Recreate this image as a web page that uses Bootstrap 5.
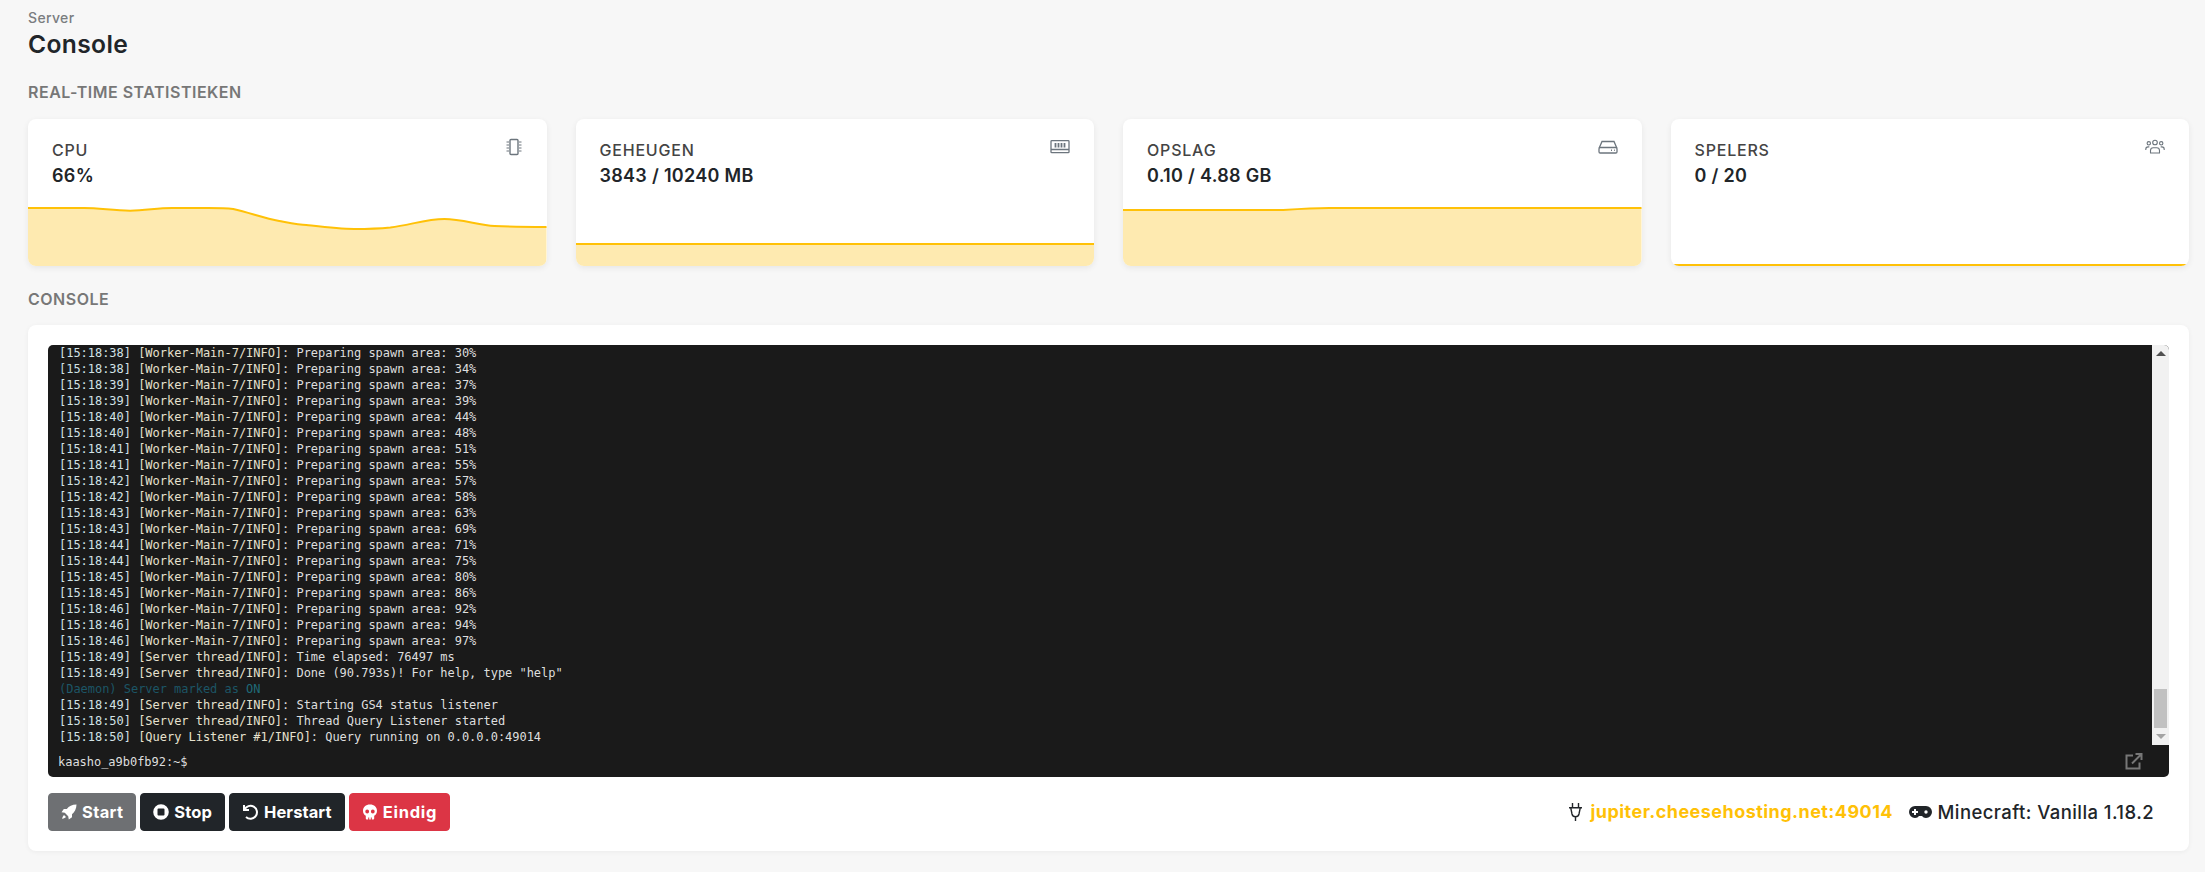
<!DOCTYPE html>
<html lang="nl">
<head>
<meta charset="utf-8">
<title>Console</title>
<link href="https://cdn.jsdelivr.net/npm/bootstrap@5.3.0/dist/css/bootstrap.min.css" rel="stylesheet">
<style>
html,body{height:872px;overflow:hidden}
body{background:#f7f7f7;font-family:Inter,"Liberation Sans",sans-serif;color:#212529}
.page-wrap{padding:9px 16px 0 28px}
.crumb{font-size:14px;line-height:18px;font-weight:500;color:#7a7d80;letter-spacing:.35px}
.page-title{font-size:24.6px;line-height:29px;font-weight:600;margin:3px 0 0;letter-spacing:.35px}
.sect-title{font-size:16px;line-height:21px;font-weight:600;color:#777;margin:0;text-transform:uppercase;letter-spacing:.5px}
.sect-stats{margin-top:23px;margin-bottom:16px}
.sect-console{margin-top:23px;margin-bottom:15px}
.stat-row{--bs-gutter-x:29px;--bs-gutter-y:0}
.stat-card{height:147px;background:#fff;border:0;border-radius:8px;overflow:hidden;box-shadow:0 2px 6px rgba(0,0,0,.07)}
.stat-head{height:81px;padding:19px 24px 0}
.stat-label{font-size:16px;line-height:24px;font-weight:500;color:#444;letter-spacing:.8px}
.stat-value{font-size:18px;line-height:24px;font-weight:600;margin-top:2px;letter-spacing:.3px}
.stat-icon{color:#6c757d;flex:none}
.chart{display:block;width:100%;height:66px}
.area{fill:#feeab0;stroke:none}
.trace{fill:none;stroke:#ffc107;stroke-width:2;vector-effect:non-scaling-stroke}
.console-card{background:#fff;border:0;border-radius:8px;padding:20px;box-shadow:0 1px 5px rgba(0,0,0,.05);height:526px}
.term{background:#1a1a1a;border-radius:5px;height:432px;overflow:hidden;font-family:"DejaVu Sans Mono",monospace;font-size:12px;line-height:16px;color:#dedede;letter-spacing:-.03px}
.term-top{height:400px}
.term-log{flex:1 1 auto;padding-left:11px;white-space:pre;min-width:0}
.term-log .ts{color:#d2e2e6}
.term-log .msg{color:#e6e1ce}
.daemon{color:#1c5565}
.daemon b{font-weight:400;color:#1f6a78}
.sbar{width:17px;background:#f1f1f1;flex:none}
.sbar-up{width:0;height:0;border:5px solid transparent;border-top:0;border-bottom:5px solid #505050;margin:6px auto 0}
.sbar-thumb{width:13px;height:39px;background:#c1c1c1;margin:333px auto 0}
.sbar-down{width:0;height:0;border:5px solid transparent;border-bottom:0;border-top:5px solid #a3a3a3;margin:6px auto 0}
.term-prompt{padding:8px 26px 8px 10px}
.ext-icon{color:#777;display:block}
.act-btn{font-weight:700;font-size:16.5px;line-height:24px;display:inline-flex;align-items:center;gap:5px;--bs-btn-border-radius:4px;letter-spacing:.1px}
.act-btn svg{flex:none}
.act-start{letter-spacing:.35px}
.act-kill{letter-spacing:.75px}
.conn{font-size:18px;line-height:24px;padding-right:15px}
.conn-link{color:#ffc107;font-weight:700;text-decoration:none;letter-spacing:.45px}
.conn-game{font-weight:500;font-size:18.5px;letter-spacing:.43px}
.conn-gap{gap:7px}
.conn-gap-tight{gap:5.5px}
</style>
</head>
<body>
<div class="page-wrap">
  <div class="crumb">Server</div>
  <h1 class="page-title">Console</h1>
  <h2 class="sect-title sect-stats">Real-time statistieken</h2>

  <div class="row stat-row">
    <div class="col-3">
      <div class="card stat-card">
        <div class="stat-head d-flex justify-content-between align-items-start">
          <div><div class="stat-label">CPU</div><div class="stat-value">66%</div></div>
          <svg class="stat-icon" width="18" height="18" viewBox="0 0 18 18" fill="none" stroke="currentColor"><rect x="5" y="1.500" width="8" height="15" rx="1" stroke-width="1.400"/><path d="M1.500 4h2.500M1.500 7h2.500M1.500 10h2.500M1.500 13h2.500M14 4h2.500M14 7h2.500M14 10h2.500M14 13h2.500" stroke-width="1"/></svg>
        </div>
        <svg class="chart" viewBox="0 0 518 66" preserveAspectRatio="none">
          <path class="area" d="M0 8L56 8C72 8 85 10.700 102 10.700C118 10.700 128 8 144 8L180 8C190 8 197 8 205 9C222 13 236 18 251 21C262 23 272 25 278 25C295 27 310 29 326 29C340 29 352 28.500 362 27.500C382 25 398 19 416 19C433 19 450 25 466 26C485 27 500 27 518 27V66H0Z"/>
          <path class="trace" d="M0 8L56 8C72 8 85 10.700 102 10.700C118 10.700 128 8 144 8L180 8C190 8 197 8 205 9C222 13 236 18 251 21C262 23 272 25 278 25C295 27 310 29 326 29C340 29 352 28.500 362 27.500C382 25 398 19 416 19C433 19 450 25 466 26C485 27 500 27 518 27"/>
        </svg>
      </div>
    </div>
    <div class="col-3">
      <div class="card stat-card">
        <div class="stat-head d-flex justify-content-between align-items-start">
          <div><div class="stat-label">GEHEUGEN</div><div class="stat-value">3843 / 10240 MB</div></div>
          <svg class="stat-icon" width="20" height="18" viewBox="0 0 20 18" fill="none" stroke="currentColor" stroke-width="1.300"><rect x="1" y="2.700" width="18" height="12" rx=".8"/><path d="M1 11.500h18"/><path d="M5.500 5v4.500M8.500 5v4.500M11.500 5v4.500M14.500 5v4.500" stroke-width="1.800"/></svg>
        </div>
        <svg class="chart" viewBox="0 0 518 66" preserveAspectRatio="none">
          <path class="area" d="M0 44H518V66H0Z"/>
          <path class="trace" d="M0 44H518"/>
        </svg>
      </div>
    </div>
    <div class="col-3">
      <div class="card stat-card">
        <div class="stat-head d-flex justify-content-between align-items-start">
          <div><div class="stat-label">OPSLAG</div><div class="stat-value">0.10 / 4.88 GB</div></div>
          <svg class="stat-icon" width="20" height="18" viewBox="0 0 20 18" fill="none" stroke="currentColor" stroke-width="1.300"><path d="M1.200 10 4 3.500h12l2.800 6.500"/><rect x="1" y="9.500" width="18" height="5.500" rx="1.200"/><path d="M13 12.300h1M16 12.300h.8" stroke-width="1.500"/></svg>
        </div>
        <svg class="chart" viewBox="0 0 518 66" preserveAspectRatio="none">
          <path class="area" d="M0 10H160C175 9 190 8 206 8H518V66H0Z"/>
          <path class="trace" d="M0 10H160C175 9 190 8 206 8H518"/>
        </svg>
      </div>
    </div>
    <div class="col-3">
      <div class="card stat-card">
        <div class="stat-head d-flex justify-content-between align-items-start">
          <div><div class="stat-label">SPELERS</div><div class="stat-value">0 / 20</div></div>
          <svg class="stat-icon" width="20" height="18" viewBox="0 0 20 18" fill="none" stroke="currentColor" stroke-width="1.100"><circle cx="10" cy="4.500" r="2.300"/><circle cx="3.800" cy="5.300" r="1.700"/><circle cx="16.200" cy="5.300" r="1.700"/><path d="M5.500 15v-2.500a2.800 2.800 0 0 1 2.800-2.800h3.400a2.800 2.800 0 0 1 2.800 2.800V15Z"/><path d="M.8 12v-.8a2.300 2.300 0 0 1 2.300-2.300h1.200M19.200 12v-.8a2.300 2.300 0 0 0-2.300-2.300h-1.200"/></svg>
        </div>
        <svg class="chart" viewBox="0 0 518 66" preserveAspectRatio="none">
          <path class="trace" d="M0 65H518"/>
        </svg>
      </div>
    </div>
  </div>

  <h2 class="sect-title sect-console">Console</h2>

  <div class="card console-card">
    <div class="term">
      <div class="term-top d-flex">
        <div class="term-log"><span class="ts">[15:18:38]</span> <span class="msg">[Worker-Main-7/INFO]</span>: Preparing spawn area: 30%
<span class="ts">[15:18:38]</span> <span class="msg">[Worker-Main-7/INFO]</span>: Preparing spawn area: 34%
<span class="ts">[15:18:39]</span> <span class="msg">[Worker-Main-7/INFO]</span>: Preparing spawn area: 37%
<span class="ts">[15:18:39]</span> <span class="msg">[Worker-Main-7/INFO]</span>: Preparing spawn area: 39%
<span class="ts">[15:18:40]</span> <span class="msg">[Worker-Main-7/INFO]</span>: Preparing spawn area: 44%
<span class="ts">[15:18:40]</span> <span class="msg">[Worker-Main-7/INFO]</span>: Preparing spawn area: 48%
<span class="ts">[15:18:41]</span> <span class="msg">[Worker-Main-7/INFO]</span>: Preparing spawn area: 51%
<span class="ts">[15:18:41]</span> <span class="msg">[Worker-Main-7/INFO]</span>: Preparing spawn area: 55%
<span class="ts">[15:18:42]</span> <span class="msg">[Worker-Main-7/INFO]</span>: Preparing spawn area: 57%
<span class="ts">[15:18:42]</span> <span class="msg">[Worker-Main-7/INFO]</span>: Preparing spawn area: 58%
<span class="ts">[15:18:43]</span> <span class="msg">[Worker-Main-7/INFO]</span>: Preparing spawn area: 63%
<span class="ts">[15:18:43]</span> <span class="msg">[Worker-Main-7/INFO]</span>: Preparing spawn area: 69%
<span class="ts">[15:18:44]</span> <span class="msg">[Worker-Main-7/INFO]</span>: Preparing spawn area: 71%
<span class="ts">[15:18:44]</span> <span class="msg">[Worker-Main-7/INFO]</span>: Preparing spawn area: 75%
<span class="ts">[15:18:45]</span> <span class="msg">[Worker-Main-7/INFO]</span>: Preparing spawn area: 80%
<span class="ts">[15:18:45]</span> <span class="msg">[Worker-Main-7/INFO]</span>: Preparing spawn area: 86%
<span class="ts">[15:18:46]</span> <span class="msg">[Worker-Main-7/INFO]</span>: Preparing spawn area: 92%
<span class="ts">[15:18:46]</span> <span class="msg">[Worker-Main-7/INFO]</span>: Preparing spawn area: 94%
<span class="ts">[15:18:46]</span> <span class="msg">[Worker-Main-7/INFO]</span>: Preparing spawn area: 97%
<span class="ts">[15:18:49]</span> <span class="msg">[Server thread/INFO]</span>: Time elapsed: 76497 ms
<span class="ts">[15:18:49]</span> <span class="msg">[Server thread/INFO]</span>: Done (90.793s)! For help, type "help"
<span class="daemon">(Daemon) Server marked as <b>ON</b></span>
<span class="ts">[15:18:49]</span> <span class="msg">[Server thread/INFO]</span>: Starting GS4 status listener
<span class="ts">[15:18:50]</span> <span class="msg">[Server thread/INFO]</span>: Thread Query Listener started
<span class="ts">[15:18:50]</span> <span class="msg">[Query Listener #1/INFO]</span>: Query running on 0.0.0.0:49014</div>
        <div class="sbar">
          <div class="sbar-up"></div>
          <div class="sbar-thumb"></div>
          <div class="sbar-down"></div>
        </div>
      </div>
      <div class="term-prompt d-flex justify-content-between align-items-center">
        <span>kaasho_a9b0fb92:~$</span>
        <svg class="ext-icon" width="18" height="17" viewBox="0 0 18 17" fill="none" stroke="currentColor" stroke-width="2"><path d="M8 2.500H1.500V15.500H14.500V9.500"/><path d="M7 10.500 16 1.500M10.500 1h6v6"/></svg>
      </div>
    </div>

    <div class="d-flex justify-content-between align-items-center mt-3">
      <div class="d-flex gap-1">
        <button class="btn btn-dark act-btn act-start disabled" type="button">
          <svg width="16" height="16" viewBox="0 0 16 16" fill="currentColor"><path d="M15.500.5C11 .5 8 2 5.800 5H2.800L.5 8.200l3.300.6 3.400 3.400.6 3.300 3.200-2.300v-3C13.500 8 15.500 5 15.500.5Z"/><path d="M3 11c-1.200 1-1.800 3.200-1.800 3.800 .6 0 2.800-.6 3.800-1.800Z"/></svg>
          Start
        </button>
        <button class="btn btn-dark act-btn" type="button">
          <svg width="16" height="16" viewBox="0 0 16 16" fill="currentColor" fill-rule="evenodd"><path d="M8 .2a7.800 7.800 0 1 0 0 15.600A7.800 7.800 0 0 0 8 .2ZM5.500 4.500h5a1 1 0 0 1 1 1v5a1 1 0 0 1-1 1h-5a1 1 0 0 1-1-1v-5a1 1 0 0 1 1-1Z"/></svg>
          Stop
        </button>
        <button class="btn btn-dark act-btn" type="button">
          <svg width="17" height="16" viewBox="0 0 17 16" fill="none" stroke="currentColor" stroke-width="2"><path d="M2 1v5h5"/><path d="M2.500 5.700A6.500 6.500 0 1 1 4 13"/></svg>
          Herstart
        </button>
        <button class="btn btn-danger act-btn act-kill" type="button">
          <svg width="16" height="16" viewBox="0 0 16 16" fill="currentColor" fill-rule="evenodd"><path d="M8 .5C3.800.5 1 3.200 1 6.800c0 2.400 1.100 4 2.800 5V14.500a1 1 0 0 0 1 1h1.400v-2h1v2h1.600v-2h1v2h1.400a1 1 0 0 0 1-1v-2.700c1.700-1 2.800-2.600 2.800-5C15 3.200 12.200.5 8 .5ZM5.200 5.600a1.900 1.900 0 1 1 0 3.800 1.900 1.900 0 0 1 0-3.800Zm5.600 0a1.900 1.900 0 1 1 0 3.800 1.900 1.900 0 0 1 0-3.800Z"/></svg>
          Eindig
        </button>
      </div>
      <div class="d-flex align-items-center conn">
        <span class="d-inline-flex align-items-center conn-gap">
          <svg width="15" height="18" viewBox="0 0 15 18" fill="none" stroke="#212529" stroke-width="1.400"><path d="M4.500 0v4M10.500 0v4M1 4.700h13M2.700 4.700l1.300 6.300a3.600 3.600 0 0 0 7 0l1.300-6.300M7.500 13.500V18"/></svg>
          <a class="conn-link" href="#">jupiter.cheesehosting.net:49014</a>
        </span>
        <span class="d-inline-flex align-items-center conn-gap-tight ms-3">
          <svg width="23" height="12" viewBox="0 0 23 12" fill="#212529" fill-rule="evenodd"><path d="M6 0H17a6 6 0 0 1 0 12c-2 0-3-.8-4-2H10c-1 1.200-2 2-4 2A6 6 0 0 1 6 0ZM5 3v2H3v2h2v2h2V7h2V5H7V3Zm12 1.300a1.700 1.700 0 1 0 0 3.400 1.700 1.700 0 0 0 0-3.400Z"/></svg>
          <span class="conn-game">Minecraft: Vanilla 1.18.2</span>
        </span>
      </div>
    </div>
  </div>
</div>
<script src="https://cdn.jsdelivr.net/npm/bootstrap@5.3.0/dist/js/bootstrap.bundle.min.js"></script>
</body>
</html>
